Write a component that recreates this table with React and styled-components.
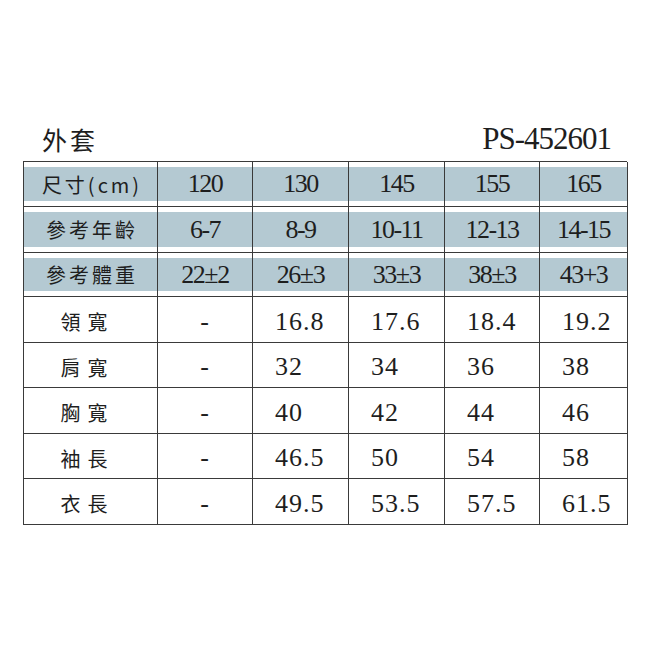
import styled, { createGlobalStyle } from "styled-components";

const GlobalStyle = createGlobalStyle`
  html, body {
    margin: 0;
    padding: 0;
    background: #fff;
  }
`;

const serif = `"Liberation Serif", "Times New Roman", serif`;
const cjk = `"Noto Sans CJK TC", "Noto Sans CJK SC", sans-serif`;

const headerRows = [
  { label: "尺寸(cm)", values: ["120", "130", "145", "155", "165"] },
  { label: "參考年齡", values: ["6-7", "8-9", "10-11", "12-13", "14-15"] },
  { label: "參考體重", values: ["22±2", "26±3", "33±3", "38±3", "43+3"] },
];

const dataRows = [
  { label: "領寬", values: ["-", "16.8", "17.6", "18.4", "19.2"] },
  { label: "肩寬", values: ["-", "32", "34", "36", "38"] },
  { label: "胸寬", values: ["-", "40", "42", "44", "46"] },
  { label: "袖長", values: ["-", "46.5", "50", "54", "58"] },
  { label: "衣長", values: ["-", "49.5", "53.5", "57.5", "61.5"] },
];

export default function App() {
  return (
    <>
      <GlobalStyle />
      <Page>
        <TitleBar>
          <Title>外套</Title>
          <Code>PS-452601</Code>
        </TitleBar>
        <SizeTable>
          {headerRows.map((row) => (
            <Row key={row.label}>
              <HeadCell>
                <Label $spaced>{row.label}</Label>
              </HeadCell>
              {row.values.map((v, i) => (
                <HeadCell key={i}>
                  <Num>{v}</Num>
                </HeadCell>
              ))}
            </Row>
          ))}
          {dataRows.map((row) => (
            <Row key={row.label}>
              <Cell>
                <Label>{row.label}</Label>
              </Cell>
              {row.values.map((v, i) => (
                <Cell key={i} $left={i > 0}>
                  <Value>{v}</Value>
                </Cell>
              ))}
            </Row>
          ))}
        </SizeTable>
      </Page>
    </>
  );
}

const Page = styled.div`
  width: 650px;
  height: 650px;
  box-sizing: border-box;
  padding: 118px 0 0 23px;
  color: #1e1e1e;
`;

const TitleBar = styled.div`
  display: flex;
  justify-content: space-between;
  align-items: flex-end;
  width: 588px;
  height: 38px;
  margin-bottom: 5px;
  padding-left: 19px;
  box-sizing: border-box;
`;

const Title = styled.div`
  font-family: ${cjk};
  font-size: 25px;
  line-height: 34px;
  letter-spacing: 3px;
  font-weight: 400;
`;

const Code = styled.div`
  font-family: ${serif};
  font-size: 31px;
  line-height: 34px;
  letter-spacing: -1px;
`;

const SizeTable = styled.div`
  display: grid;
  grid-template-columns: 134px 95px 96px 96px 95px 88px;
  grid-template-rows: 45px 46px 44px 46px 45px 46px 45px 46px;
  width: 604px;
  border-top: 1px solid #3a3a3a;
  border-left: 1px solid #3a3a3a;
  box-sizing: border-box;
`;

const Row = styled.div`
  display: contents;
`;

const Cell = styled.div`
  display: flex;
  align-items: center;
  justify-content: ${({ $left }) => ($left ? "flex-start" : "center")};
  padding: ${({ $left }) => ($left ? "4px 0 0 22px" : "4px 0 0 0")};
  border-right: 1px solid #3a3a3a;
  border-bottom: 1px solid #3a3a3a;
  box-sizing: border-box;
  min-width: 0;
`;

const HeadCell = styled.div`
  display: flex;
  align-items: center;
  justify-content: center;
  padding: 5px 0;
  background: #b4c9d2;
  background-clip: content-box;
  border-right: 1px solid #3a3a3a;
  border-bottom: 1px solid #3a3a3a;
  box-sizing: border-box;
  min-width: 0;
`;

const Label = styled.span`
  font-family: ${cjk};
  font-size: 20px;
  letter-spacing: ${({ $spaced }) => ($spaced ? "3px" : "7px")};
  padding-left: ${({ $spaced }) => ($spaced ? "3px" : "0")};
  margin-right: ${({ $spaced }) => ($spaced ? "0" : "6px")};
  white-space: nowrap;
`;

const Num = styled.span`
  font-family: ${serif};
  font-size: 26px;
  letter-spacing: -1.5px;
  white-space: nowrap;
`;

const Value = styled.span`
  font-family: ${serif};
  font-size: 26px;
  letter-spacing: 1px;
  white-space: nowrap;
`;
